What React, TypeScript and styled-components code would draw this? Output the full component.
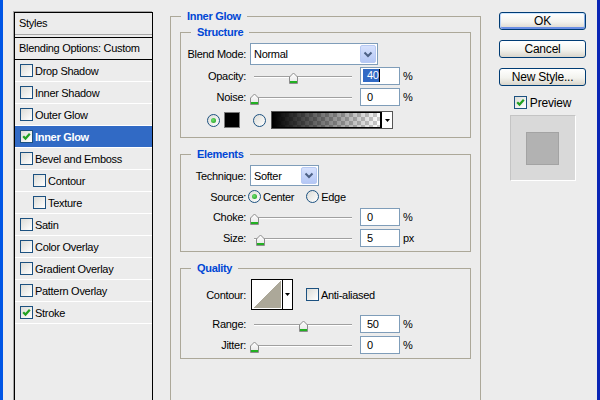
import React from "react";
import styled, { createGlobalStyle } from "styled-components";

const GlobalStyle = createGlobalStyle`
  html, body {
    margin: 0;
    padding: 0;
    background: #ececec;
  }
  body {
    font-family: "Liberation Sans", Arial, sans-serif;
    font-size: 11px;
    letter-spacing: -0.3px;
    color: #000;
  }
  * {
    box-sizing: border-box;
  }
`;

const Window = styled.div`
  display: flex;
  align-items: flex-start;
  width: 600px;
  height: 400px;
  overflow: hidden;
  background: #ececec;
  border-left: 3px solid #0055e5;
  border-right: 3px solid #0a26b5;
`;

/* ---------- left list ---------- */

const StylesPanel = styled.div`
  flex: none;
  width: 139px;
  height: 420px;
  margin: 12px 0 0 11px;
  border: 1px solid #000;
  box-shadow: -1px -1px 0 #a5a5a5;
`;

const PanelHeader = styled.div`
  height: 22px;
  padding-left: 4px;
  line-height: 21px;
  border-bottom: 1px solid #a8a8a8;
`;

const StyleList = styled.div`
  margin-top: 2px;
`;

const BlendingRow = styled.div`
  height: 23px;
  padding-left: 4px;
  line-height: 21px;
  border-top: 1px solid #000;
  border-bottom: 1px solid #000;
`;

const StyleRow = styled.div<{ $selected?: boolean; $indent?: boolean }>`
  display: flex;
  align-items: center;
  gap: 2px;
  height: 22px;
  padding-left: ${(p) => (p.$indent ? 18 : 5)}px;
  border-bottom: 1px solid #fff;
  background: ${(p) => (p.$selected ? "#316ac5" : "transparent")};
  color: ${(p) => (p.$selected ? "#fff" : "#000")};
  font-weight: ${(p) => (p.$selected ? "bold" : "normal")};
`;

/* ---------- small controls ---------- */

const Box = styled.span`
  flex: none;
  display: flex;
  align-items: center;
  justify-content: center;
  width: 13px;
  height: 13px;
  border: 1px solid #1c5180;
  background: linear-gradient(135deg, #dcdcd7, #fff);
`;

const Round = styled(Box)`
  border-radius: 50%;
`;

const Dot = styled.span`
  width: 5px;
  height: 5px;
  border-radius: 50%;
  background: radial-gradient(circle at 40% 40%, #6ee06e, #189818);
`;

const CheckBox = ({ checked }: { checked?: boolean }) => (
  <Box>
    {checked && (
      <svg width="9" height="9" viewBox="0 0 9 9">
        <path d="M1.2 4.2 L3.5 6.6 L7.8 1.8" fill="none" stroke="#21a121" strokeWidth="2.2" />
      </svg>
    )}
  </Box>
);

const Radio = ({ checked }: { checked?: boolean }) => <Round>{checked && <Dot />}</Round>;

const Arrow = () => (
  <svg width="5" height="3" viewBox="0 0 5 3">
    <path d="M0 0 H5 L2.5 3 Z" fill="#000" />
  </svg>
);

/* ---------- groups ---------- */

const OuterGroup = styled.div`
  flex: none;
  width: 311px;
  height: 420px;
  margin: 16px 0 0 17px;
  padding: 0 9px;
  border: 1px solid #aca899;
`;

const Group = styled.div<{ $mt: number; $pb: number }>`
  margin-top: ${(p) => p.$mt}px;
  padding-bottom: ${(p) => p.$pb}px;
  border: 1px solid #aca899;
`;

const Legend = styled.div<{ $offset: number }>`
  width: fit-content;
  margin: -7px 0 0 ${(p) => p.$offset}px;
  padding: 0 6px;
  line-height: 13px;
  background: #ececec;
  color: #0046d5;
  font-weight: bold;
`;

const FieldRow = styled.div<{ $h: number; $mt?: number }>`
  display: grid;
  grid-template-columns: 65px 1fr;
  column-gap: 4px;
  align-items: center;
  height: ${(p) => p.$h}px;
  margin-top: ${(p) => p.$mt || 0}px;
`;

const Label = styled.span`
  text-align: right;
  white-space: nowrap;
`;

const Controls = styled.div<{ $gap?: number }>`
  display: flex;
  align-items: center;
  gap: ${(p) => p.$gap || 0}px;
`;

/* ---------- dropdowns ---------- */

const SelectBox = styled.div<{ $w: number; $h: number }>`
  display: flex;
  align-items: center;
  width: ${(p) => p.$w}px;
  height: ${(p) => p.$h}px;
  padding: 0 1px 0 3px;
  border: 1px solid #7f9db9;
  background: #fff;
`;

const DropButton = styled.span`
  display: flex;
  align-items: center;
  justify-content: center;
  width: 16px;
  height: calc(100% - 2px);
  margin-left: auto;
  border: 1px solid #b7c9f3;
  border-radius: 2px;
  background: linear-gradient(#d6e1fd, #b4c7f5);
`;

const Dropdown = ({ w, h, children }: { w: number; h: number; children: React.ReactNode }) => (
  <SelectBox $w={w} $h={h}>
    {children}
    <DropButton>
      <svg width="10" height="7" viewBox="0 0 10 7">
        <path d="M1.5 1.5 L5 5 L8.5 1.5" fill="none" stroke="#4d6185" strokeWidth="2" />
      </svg>
    </DropButton>
  </SelectBox>
);

/* ---------- sliders & fields ---------- */

const Slider = styled.div`
  position: relative;
  flex: none;
  width: 106px;
  height: 21px;
  padding-top: 11px;
`;

const Track = styled.div`
  height: 2px;
  margin: 0 4px;
  border-top: 1px solid #a0a0a0;
  border-bottom: 1px solid #fff;
`;

const Thumb = styled.svg`
  position: absolute;
  top: 7px;
`;

const NumberField = styled.div`
  display: flex;
  align-items: center;
  flex: none;
  width: 40px;
  height: 18px;
  margin-left: 4px;
  padding-left: 6px;
  border: 1px solid #7f9db9;
  background: #fff;
`;

const Selection = styled.span`
  margin-left: -4px;
  padding: 0 0 0 4px;
  line-height: 13px;
  background: #316ac5;
  color: #fff;
  border-right: 1px solid #000;
`;

const Unit = styled.span`
  margin-left: 3px;
`;

interface SliderRowProps {
  label: string;
  value: string;
  unit: string;
  pos: number;
  selected?: boolean;
}

const SliderRow = ({ label, value, unit, pos, selected }: SliderRowProps) => (
  <FieldRow $h={21}>
    <Label>{label}</Label>
    <Controls>
      <Slider>
        <Track />
        <Thumb width="11" height="12" viewBox="0 0 11 12" style={{ left: pos - 1 }}>
          <defs>
            <linearGradient id="thumbFill" x1="0" y1="0" x2="0" y2="1">
              <stop offset="0" stopColor="#fff" />
              <stop offset="1" stopColor="#e4e4e4" />
            </linearGradient>
          </defs>
          <path d="M1.5 5 L5.5 1 L9.5 5 V11.5 H1.5 Z" fill="url(#thumbFill)" stroke="#8c8c8c" />
          <rect x="2" y="9" width="7" height="2" fill="#22b022" />
        </Thumb>
      </Slider>
      <NumberField>{selected ? <Selection>{value}</Selection> : value}</NumberField>
      <Unit>{unit}</Unit>
    </Controls>
  </FieldRow>
);

/* ---------- colour row ---------- */

const ColorRow = styled.div`
  display: flex;
  align-items: center;
  height: 20px;
  margin-top: 3px;
  padding-left: 26px;
`;

const Swatch = styled.span`
  width: 16px;
  height: 16px;
  margin: 0 13px 0 4px;
  border: 1px solid #7a7a7a;
  background: #000;
`;

const GradientPicker = styled.div`
  display: flex;
  width: 122px;
  height: 18px;
  margin-left: 5px;
  border: 1px solid #555;
  background: #fff;
`;

const GradientFill = styled.div`
  flex: 1;
  border: 1px solid #000;
  background: linear-gradient(to right, #000, rgba(0, 0, 0, 0)),
    conic-gradient(#cdcdcd 25%, #fff 0 50%, #cdcdcd 0 75%, #fff 0) 0 0 / 8px 8px;
`;

const ArrowCell = styled.span<{ $w: number }>`
  display: flex;
  align-items: center;
  justify-content: center;
  width: ${(p) => p.$w}px;
  border-left: 1px solid #000;
  background: #fff;
`;

/* ---------- radios & contour ---------- */

const Option = styled.label<{ $ml?: number }>`
  display: flex;
  align-items: center;
  gap: 2px;
  margin-left: ${(p) => p.$ml || 0}px;
`;

const ContourPicker = styled.div`
  display: flex;
  width: 42px;
  height: 31px;
  margin: 0 13px 0 1px;
  border: 1px solid #000;
`;

const ContourCurve = styled.div`
  flex: 1;
  border: 1px solid #fff;
  background: linear-gradient(to bottom right, #fff 50%, #aca899 50%);
`;

/* ---------- right column ---------- */

const Actions = styled.div`
  flex: none;
  display: flex;
  flex-direction: column;
  align-items: center;
  width: 87px;
  margin: 12px 0 0 18px;
`;

const Button = styled.button<{ $default?: boolean }>`
  width: 100%;
  height: 18px;
  margin-bottom: 10px;
  padding: 0;
  border: 1px solid #003c74;
  border-radius: 3px;
  font-family: "Liberation Sans", Arial, sans-serif;
  font-size: 12px;
  letter-spacing: -0.2px;
  line-height: 14px;
  color: #000;
  background: linear-gradient(#ffffff, #f3f3ee 55%, #d9d5cb);
  box-shadow: ${(p) =>
    p.$default
      ? "inset 0 1px 0 #cee7ff, inset 1px 0 0 #bcd4f6, inset -1px 0 0 #89ade4, inset 0 -2px 0 #6b8fe4"
      : "none"};
`;

const PreviewToggle = styled.label`
  display: flex;
  align-items: center;
  gap: 3px;
  height: 13px;
  font-size: 12px;
  letter-spacing: -0.2px;
`;

const PreviewFrame = styled.div`
  display: flex;
  align-items: center;
  justify-content: center;
  width: 66px;
  height: 66px;
  margin-top: 6px;
  border: 1px solid #c4c4c4;
  border-right-color: #fff;
  border-bottom-color: #fff;
  background: #d9d9d9;
`;

const PreviewSample = styled.div`
  width: 33px;
  height: 33px;
  border: 1px solid #a3a3a3;
  background: #b2b2b2;
`;

const styleRows = [
  { label: "Drop Shadow" },
  { label: "Inner Shadow" },
  { label: "Outer Glow" },
  { label: "Inner Glow", checked: true, selected: true },
  { label: "Bevel and Emboss" },
  { label: "Contour", indent: true },
  { label: "Texture", indent: true },
  { label: "Satin" },
  { label: "Color Overlay" },
  { label: "Gradient Overlay" },
  { label: "Pattern Overlay" },
  { label: "Stroke", checked: true },
];

export default function App() {
  return (
    <>
      <GlobalStyle />
      <Window>
        <StylesPanel>
          <PanelHeader>Styles</PanelHeader>
          <StyleList>
            <BlendingRow>Blending Options: Custom</BlendingRow>
            {styleRows.map((row) => (
              <StyleRow key={row.label} $selected={row.selected} $indent={row.indent}>
                <CheckBox checked={row.checked} />
                <span>{row.label}</span>
              </StyleRow>
            ))}
          </StyleList>
        </StylesPanel>

        <OuterGroup>
          <Legend $offset={1}>Inner Glow</Legend>

          <Group $mt={9} $pb={7}>
            <Legend $offset={10}>Structure</Legend>
            <FieldRow $h={22} $mt={4}>
              <Label>Blend Mode:</Label>
              <Dropdown w={128} h={22}>Normal</Dropdown>
            </FieldRow>
            <SliderRow label="Opacity:" value="40" unit="%" pos={39} selected />
            <SliderRow label="Noise:" value="0" unit="%" pos={0} />
            <ColorRow>
              <Radio checked />
              <Swatch />
              <Radio />
              <GradientPicker>
                <GradientFill />
                <ArrowCell $w={11}>
                  <Arrow />
                </ArrowCell>
              </GradientPicker>
            </ColorRow>
          </Group>

          <Group $mt={16} $pb={3}>
            <Legend $offset={10}>Elements</Legend>
            <FieldRow $h={21} $mt={4}>
              <Label>Technique:</Label>
              <Dropdown w={69} h={21}>Softer</Dropdown>
            </FieldRow>
            <FieldRow $h={19} $mt={1}>
              <Label>Source:</Label>
              <Controls>
                <Option $ml={-2}>
                  <Radio checked />
                  Center
                </Option>
                <Option $ml={12}>
                  <Radio />
                  Edge
                </Option>
              </Controls>
            </FieldRow>
            <SliderRow label="Choke:" value="0" unit="%" pos={0} />
            <SliderRow label="Size:" value="5" unit="px" pos={6} />
          </Group>

          <Group $mt={16} $pb={3}>
            <Legend $offset={10}>Quality</Legend>
            <FieldRow $h={31} $mt={4}>
              <Label>Contour:</Label>
              <Controls>
                <ContourPicker>
                  <ContourCurve />
                  <ArrowCell $w={10}>
                    <Arrow />
                  </ArrowCell>
                </ContourPicker>
                <Option>
                  <CheckBox />
                  Anti-aliased
                </Option>
              </Controls>
            </FieldRow>
            <FieldRow $h={3} />
            <SliderRow label="Range:" value="50" unit="%" pos={49} />
            <SliderRow label="Jitter:" value="0" unit="%" pos={0} />
          </Group>
        </OuterGroup>

        <Actions>
          <Button $default>OK</Button>
          <Button>Cancel</Button>
          <Button>New Style...</Button>
          <PreviewToggle>
            <CheckBox checked />
            Preview
          </PreviewToggle>
          <PreviewFrame>
            <PreviewSample />
          </PreviewFrame>
        </Actions>
      </Window>
    </>
  );
}
